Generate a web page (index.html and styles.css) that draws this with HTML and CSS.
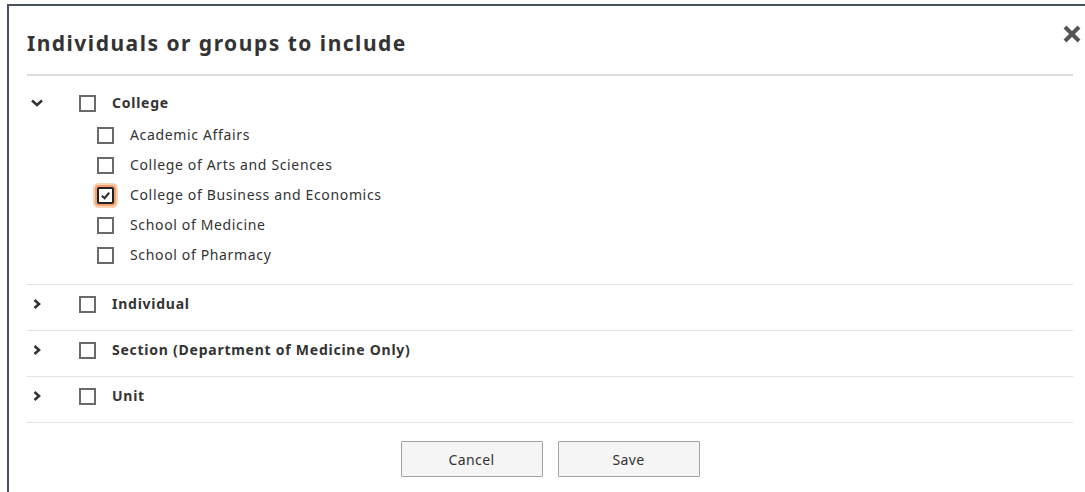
FILE: index.html
```html
<!DOCTYPE html>
<html lang="en">
<head>
<meta charset="utf-8">
<title>Individuals or groups to include</title>
<link rel="stylesheet" href="styles.css">
</head>
<body>
<div class="dialog" role="dialog" aria-labelledby="dlg-title">
  <button class="close" type="button" aria-label="Close">
    <svg viewBox="0 0 20 20" width="20" height="20"><path d="M3 3 17 17M17 3 3 17" /></svg>
  </button>
  <header class="dialog-header">
    <h2 id="dlg-title" class="dialog-title">Individuals or groups to include</h2>
  </header>

  <ul class="groups">
    <li class="group">
      <div class="row">
        <span class="toggle">
          <svg viewBox="0 0 14 8" width="14" height="8"><path d="M2 1.5 7 6 12 1.5" /></svg>
        </span>
        <span class="box"></span>
        <span class="label strong">College</span>
      </div>
      <ul class="children">
        <li class="row child"><span class="box"></span><span class="label">Academic Affairs</span></li>
        <li class="row child"><span class="box"></span><span class="label">College of Arts and Sciences</span></li>
        <li class="row child"><span class="box checked"><svg viewBox="0 0 12 12" width="11" height="11"><path d="M2 6.2 5 9 10 3" /></svg></span><span class="label">College of Business and Economics</span></li>
        <li class="row child"><span class="box"></span><span class="label">School of Medicine</span></li>
        <li class="row child"><span class="box"></span><span class="label">School of Pharmacy</span></li>
      </ul>
    </li>
    <li class="group">
      <div class="row">
        <span class="toggle right">
          <svg viewBox="0 0 8 10" width="8" height="10"><path d="M1.5 1 6 5 1.5 9" /></svg>
        </span>
        <span class="box"></span>
        <span class="label strong">Individual</span>
      </div>
    </li>
    <li class="group">
      <div class="row">
        <span class="toggle right">
          <svg viewBox="0 0 8 10" width="8" height="10"><path d="M1.5 1 6 5 1.5 9" /></svg>
        </span>
        <span class="box"></span>
        <span class="label strong">Section (Department of Medicine Only)</span>
      </div>
    </li>
    <li class="group">
      <div class="row">
        <span class="toggle right">
          <svg viewBox="0 0 8 10" width="8" height="10"><path d="M1.5 1 6 5 1.5 9" /></svg>
        </span>
        <span class="box"></span>
        <span class="label strong">Unit</span>
      </div>
    </li>
  </ul>

  <footer class="actions">
    <button class="btn" type="button">Cancel</button>
    <button class="btn" type="button">Save</button>
  </footer>
</div>
</body>
</html>
```

FILE: styles.css
```css
html, body {
  margin: 0;
  padding: 0;
  background: #ffffff;
  overflow: hidden;
}

body {
  font-family: "Noto Sans", "Open Sans", "DejaVu Sans", sans-serif;
  color: #333333;
}

.dialog {
  position: relative;
  margin: 4px 0 0 7px;
  width: 1046px;
  padding: 0 40px 40px 18px;
  border-top: 2px solid #48525c;
  border-left: 2px solid #48525c;
  background: #ffffff;
}

.close {
  position: absolute;
  top: 17px;
  left: 1052px;
  width: 22px;
  height: 22px;
  padding: 0;
  border: 0;
  background: transparent;
  display: flex;
  align-items: center;
  justify-content: center;
}

.close svg path {
  fill: none;
  stroke: #555555;
  stroke-width: 4;
}

.dialog-header {
  padding: 22px 0 0 0;
  height: 46px;
  border-bottom: 2px solid #dddddd;
}

.dialog-title {
  margin: 0;
  font-size: 21px;
  font-weight: 700;
  line-height: 30px;
  color: #333333;
  letter-spacing: 1.5px;
}

.groups,
.children {
  list-style: none;
  margin: 0;
  padding: 0;
}

.groups {
  padding-top: 8px;
}

.group {
  padding: 9px 0 16px;
  border-bottom: 1px solid #e2e2e2;
}

.row {
  display: flex;
  align-items: center;
  height: 20px;
}

.toggle {
  width: 52px;
  display: flex;
  align-items: center;
  padding-left: 3px;
  box-sizing: border-box;
}

.toggle.right {
  padding-left: 6px;
}

.toggle svg path {
  fill: none;
  stroke: #333333;
  stroke-width: 2.6;
}

.box {
  flex: none;
  width: 17px;
  height: 17px;
  box-sizing: border-box;
  border: 2px solid #6a6a6a;
  background: #ffffff;
  display: flex;
  align-items: center;
  justify-content: center;
}

.box.checked {
  border: 2px solid #222222;
  box-shadow: 0 0 0 2px #f3a06c, 0 0 0 4px #f9d2b8;
  border-radius: 2px;
}

.box.checked svg path {
  fill: none;
  stroke: #333333;
  stroke-width: 2.4;
}

.label {
  margin-left: 16px;
  font-size: 14px;
  line-height: 20px;
  color: #333333;
  letter-spacing: 0.65px;
}

.label.strong {
  font-weight: 700;
  letter-spacing: 0.75px;
}

.children {
  margin: 7px 0 -2px 70px;
}

.row.child {
  height: 30px;
}

.actions {
  display: flex;
  justify-content: center;
  gap: 15px;
  padding-top: 18px;
}

.btn {
  width: 142px;
  height: 36px;
  font-family: inherit;
  font-size: 14px;
  letter-spacing: 0.4px;
  color: #333333;
  background: #f5f5f5;
  border: 1px solid #a3a3a3;
  border-radius: 1px;
}
```
